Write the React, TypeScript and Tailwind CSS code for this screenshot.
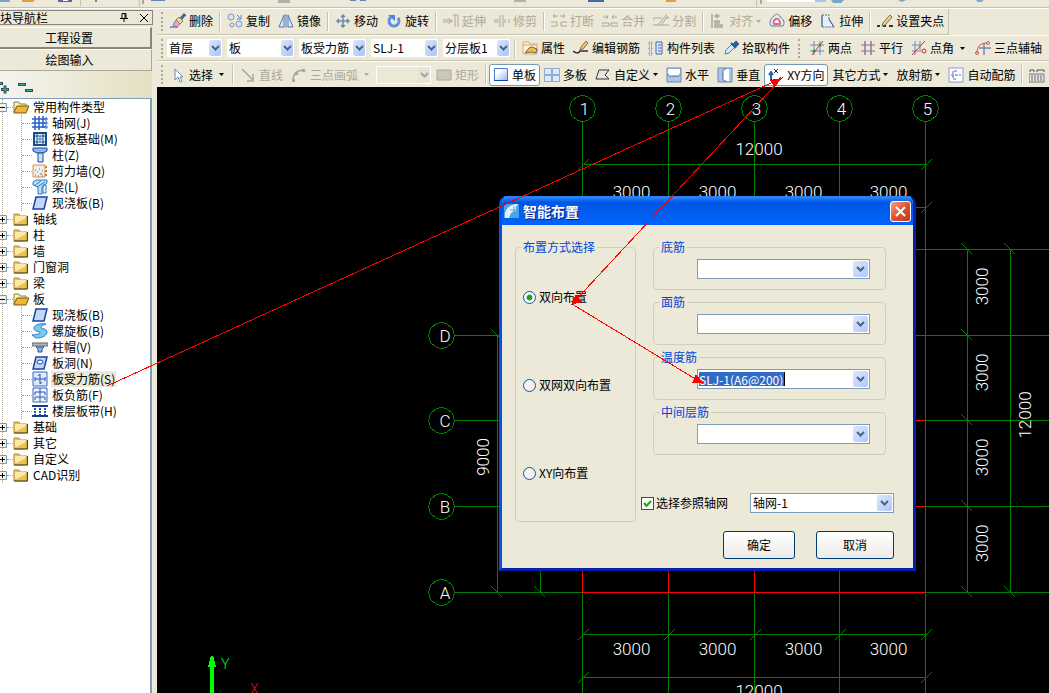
import { useState } from "react";
import type { ReactNode } from "react";

const icons: Record<string, ReactNode> = {
  erase: (
    <>
      <path d="M0 13h7l1 2H0z" fill="#7d9cc4" />
      <path d="M15 1l-5 6" stroke="#3f6795" strokeWidth="3" />
      <path d="M9 4l4 4-3 3-4-4z" fill="#f5d67b" stroke="#8c7a52" />
      <path d="M6 7l4 4-3 3-4-2z" fill="#e8a8c8" stroke="#8f7690" />
    </>
  ),
  copy: (
    <>
      <circle cx="4" cy="4" r="3" fill="#dbe4f2" stroke="#7f95b5" />
      <circle cx="5" cy="12" r="2" fill="#dbe4f2" stroke="#7f95b5" />
      <circle cx="12" cy="11" r="3" fill="#dbe4f2" stroke="#7f95b5" />
      <path d="M10 2l4 4M14 2v4h-4" fill="none" stroke="#5d83bd" />
    </>
  ),
  mirror: (
    <>
      <path d="M6 2v12H1zM10 2v12h5z" fill="#dde8fa" stroke="#4d77b8" />
      <path d="M8 1v14" stroke="#4d77b8" />
    </>
  ),
  move: (
    <path
      d="M8 2v12M2 8h12M6 4l2-2 2 2M6 12l2 2 2-2M4 6L2 8l2 2M12 6l2 2-2 2"
      fill="none"
      stroke="#6f8bb3"
      strokeWidth="1.5"
    />
  ),
  rotate: (
    <>
      <path d="M5 4a5 5 0 1 0 7 1" fill="none" stroke="#5f90df" strokeWidth="3" />
      <path d="M2 2h7v6z" fill="#4f83d9" />
    </>
  ),
  extend: (
    <path d="M0 7h5M0 9h5M6 5v6M8 6v4M12 2v12M15 2v12M6 8h4M10 2h5" fill="none" stroke="#aca899" />
  ),
  trim: <path d="M0 7h5M0 9h5M6 2v12M9 2v12M10 7h2M14 7h2M10 9h2M14 9h2" fill="none" stroke="#aca899" />,
  breakLine: (
    <path d="M7 3H2l2-2M2 3l2 2M9 3h5l-2-2M14 3l-2 2M0 9h6v4H0M16 9h-6v4h6" fill="none" stroke="#aca899" />
  ),
  merge: (
    <path d="M1 4h5M4 2l2 2-2 2M15 4h-5M12 2l-2 2 2 2M0 10h7v3H0zM9 10h7v3H9z" fill="none" stroke="#aca899" />
  ),
  split: <path d="M0 5h9M0 12h16M0 5v3M14 1L5 12M15 3L8 12M12 5h4" fill="none" stroke="#aca899" />,
  align: <path d="M2 1v14M5 3h5M8 1L5 3l3 2M5 8h4v2H5zM5 12h7v2H5z" fill="none" stroke="#aca899" strokeWidth="1.5" />,
  offset: (
    <>
      <path d="M5 3c2-3 5-2 6 1 4 2 5 6 3 9H2C0 10 1 6 5 3z" fill="#e5edf8" stroke="#567aad" />
      <path d="M7 6c2-1 5 3 4 5H5c-1-2 0-4 2-5z" fill="#fff" stroke="#e07070" strokeWidth="2" />
    </>
  ),
  stretch: (
    <>
      <path d="M2 2h7v5l5 7H2z" fill="#e8eff9" stroke="#42659b" strokeDasharray="2 1" />
      <path d="M2 2v12M9 6l5 8" fill="none" stroke="#42659b" />
    </>
  ),
  grip: (
    <>
      <path d="M0 13h3M6 13h3M12 13h4" stroke="#333" strokeWidth="2" />
      <path d="M13 2l-7 8-1 3 3-1 7-8z" fill="#f3d98a" stroke="#7a6a4a" />
    </>
  ),
  property: (
    <>
      <path d="M1 2h6l1 2h7v10H1z" fill="#fdf0dc" stroke="#e0a56c" />
      <path d="M1 5h14" stroke="#e0a56c" />
      <path d="M3 13l4-5 3-1 5 2-1 4-5-1z" fill="#e8c14b" stroke="#766345" />
    </>
  ),
  edit: (
    <>
      <path d="M0 11c3 2 5 3 7 0h8" fill="none" stroke="#333" strokeWidth="1.5" />
      <path d="M13 1l-5 6-1 3 3-1 5-6z" fill="#f2c66c" stroke="#a5604c" />
    </>
  ),
  list: (
    <>
      <path d="M1 2h3v3H1zM1 7h3v3H1zM1 12h3v3H1z" fill="#d6e3f8" stroke="#5d7dae" strokeDasharray="1 1" />
      <path d="M8 2h6v12H8z" fill="#e3ebfa" stroke="#3e66a7" />
      <path d="M10 5h3M10 8h3M10 11h3" stroke="#3e66a7" />
    </>
  ),
  pick: (
    <>
      <path d="M2 14l1-4 6-6 3 3-6 6z" fill="#d9eaff" stroke="#4f7eb5" />
      <path d="M8 3l5 5M10 5l3-3 2 2-3 3z" stroke="#245f9f" strokeWidth="2" fill="#245f9f" />
    </>
  ),
  twoPoint: (
    <>
      <path d="M1 5h14M1 11h14M5 1v14M11 1v14" stroke="#7087b5" />
      <path d="M3 15L14 1" stroke="#c43131" />
      <circle cx="11" cy="5" r="1.5" fill="#3d8d46" />
      <circle cx="5" cy="11" r="1.5" fill="#3d8d46" />
    </>
  ),
  parallel: (
    <>
      <path d="M5 1v14M11 1v14" stroke="#7087b5" strokeWidth="1.5" />
      <path d="M1 5h14M1 11h14" stroke="#be5f67" />
    </>
  ),
  pointAngle: (
    <>
      <path d="M1 5h9M1 11h9M4 1v14M9 1v9" stroke="#7087b5" />
      <path d="M1 15L14 1" stroke="#c43131" />
      <circle cx="13" cy="11" r="2" fill="none" stroke="#c43131" />
    </>
  ),
  threePoint: (
    <>
      <path d="M4 8h12M9 3v12" stroke="#7087b5" strokeWidth="1.5" />
      <path d="M2 13c0-7 4-10 10-10" fill="none" stroke="#d45151" />
      <circle cx="13" cy="3" r="1.5" fill="none" stroke="#d45151" />
      <circle cx="2" cy="13" r="1.5" fill="none" stroke="#d45151" />
    </>
  ),
  cursor: <path d="M5 2v11l3-3 2 5 2-1-2-4h3z" fill="#fff" stroke="#7288b4" />,
  line: <path d="M2 2l11 11M13 7v7H7" fill="none" stroke="#aca899" strokeWidth="1.5" />,
  arc: (
    <>
      <path d="M2 14c0-7 4-11 11-11" fill="none" stroke="#aca899" strokeWidth="1.5" />
      <path d="M1 12h3v3H1zM4 5h3v3H4zM11 2h3v3h-3z" fill="#aca899" />
    </>
  ),
  rect: <path d="M1 3h14v10H1z" fill="#cbc8ba" stroke="#aca899" />,
  single: (
    <>
      <defs>
        <linearGradient id="plate" x1="0" y1="0" x2="1" y2="1">
          <stop offset="0.3" stopColor="#fff" />
          <stop offset="1" stopColor="#8db4f5" />
        </linearGradient>
      </defs>
      <path d="M1.500 1.500h13v12h-13z" fill="url(#plate)" stroke="#4a7ad0" />
      <path d="M1 13.500h14" stroke="#1244a8" />
    </>
  ),
  multi: (
    <>
      <path d="M0 1h16v14H0z" fill="#8faed8" />
      <path d="M1 2h6v5H1zM9 2h6v5H9zM1 9h6v5H1zM9 9h6v5H9z" fill="#dceafa" />
    </>
  ),
  custom: <path d="M4 3h10l-4 5 4 4H1z" fill="none" stroke="#2f3445" />,
  horizontal: (
    <>
      <path d="M1 1h14v14H1z" fill="#a8c5eb" stroke="#6d8ab5" />
      <path d="M2 2h12v7H2z" fill="#fff" />
      <path d="M2 7c1 3 2 2 6 2s5 1 6-2" fill="none" stroke="#3f598a" />
    </>
  ),
  vertical: (
    <>
      <path d="M1 1h14v14H1z" fill="#a8c5eb" stroke="#6d8ab5" />
      <path d="M6 2h6v12H6z" fill="#fff" />
      <path d="M9 2c-4 0-3 2-3 6s-1 6 3 6" fill="none" stroke="#3f598a" />
    </>
  ),
  xy: (
    <>
      <path d="M3 13V6M1 8l2-3 2 3" fill="none" stroke="#2c61ba" strokeWidth="2" />
      <path d="M6 2l4 4M10 2L6 6M3 12c2 2 4 2 7 1M12 10l1 2 2-2" fill="none" stroke="#222" />
    </>
  ),
  auto: (
    <>
      <path d="M1 1h14v14H1z" fill="#fff" stroke="#8f96d4" />
      <path d="M9 4H5v8h4M3 8h10" fill="none" stroke="#4a64c8" strokeDasharray="3 1" />
    </>
  ),
  calendar: (
    <>
      <path d="M0 7h15v8H0z" fill="#e7e7e7" stroke="#777" />
      <path d="M3 8v6M6 8v6M9 8v6M12 8v6" stroke="#6a6a6a" />
      <path d="M1 5V3h4v2M8 5V3h7v2" fill="none" stroke="#555" />
    </>
  ),
  folder: (
    <>
      <path d="M1 3h5l1 2h7v9H1z" fill="#efc04a" stroke="#a98e50" />
      <path d="M2 5h11v2L4 12H2z" fill="#fbe9a4" />
      <path d="M1 14h13.500V5" fill="none" stroke="#57420f" />
    </>
  ),
  folderOpen: (
    <>
      <path d="M1 13V3h5l1 2h6v3" fill="#fbeeb7" stroke="#9a7d3b" />
      <path d="M1 13l3-6h12l-3 7H1z" fill="#edb935" stroke="#745613" />
    </>
  ),
  grid: (
    <>
      <path d="M3 1v14M7 1v14M11 1v12M0 4h13M0 8h13M0 12h13" stroke="#2a5fc1" strokeWidth="1.5" />
      <path d="M13 3h2v2h-2zM13 7h2v2h-2zM13 11h2v2h-2z" fill="#fff" stroke="#2a5fc1" />
    </>
  ),
  raft: (
    <>
      <path d="M2 2h12v12H2z" fill="#e9f5ff" stroke="#164d8e" strokeWidth="2" />
      <path d="M5 3v10M11 3v10M3 5h10M3 11h10" stroke="#164d8e" />
      <path d="M8 5v6M5 8h6" stroke="#4383bb" />
    </>
  ),
  column: (
    <>
      <path d="M1 1h14v3l-4 2H5L1 4z" fill="#8bb5ed" stroke="#1d4792" />
      <path d="M6 6h5v9H6z" fill="#cce1fb" stroke="#1d4792" />
    </>
  ),
  shear: (
    <>
      <path d="M1 2h12v12H1z" fill="#efeeeb" stroke="#d58b5b" />
      <path d="M3 7h1M7 6h1M5 9h1M10 8h1M3 12h1M8 11h2M6 13h1M10 13h1" stroke="#666" />
      <path d="M13 4h2M13 8h2M13 12h2" stroke="#db7720" strokeWidth="2" />
    </>
  ),
  beam: (
    <>
      <path d="M1 3l3-2h11v3l-5 4v7H6V8L1 6z" fill="#bce0fa" stroke="#287bba" />
      <path d="M3 6l6-4M5 8l8-5M11 6h3v8h-3z" fill="none" stroke="#287bba" />
    </>
  ),
  slab: <path d="M4 2h11l-3 12H1z" fill="#c0d7fa" stroke="#1c439c" strokeWidth="1.5" />,
  spiral: (
    <path
      d="M14 1C8 0 1 2 2 6c1 3 7 2 6 4-1 1-5 2-8 2l4 3c7 0 11-3 11-6 0-4-7-3-6-5 0-1 2-2 5-3z"
      fill="#7cc9ef"
      stroke="#2a7dc8"
    />
  ),
  cap: (
    <>
      <path d="M0 4h16v3H0z" fill="#b8b8b8" stroke="#626262" />
      <path d="M4 8h8l-2 2v3H6v-3z" fill="#8eb6ef" stroke="#2453a3" />
    </>
  ),
  hole: (
    <>
      <path d="M4 2h11l-3 12H1z" fill="#c0d7fa" stroke="#1c439c" strokeWidth="1.5" />
      <ellipse cx="8" cy="7" rx="3" ry="2" fill="#fff" stroke="#1c439c" />
    </>
  ),
  mainBar: (
    <>
      <path d="M1 1h14v14H1z" fill="#dfe9fd" stroke="#3d64be" />
      <path d="M3 8h10M8 3v10M3 6v4M13 10V6M6 5l2-2M10 11l-2 2" fill="none" stroke="#2854ad" />
    </>
  ),
  negBar: (
    <>
      <path d="M1 1h14v14H1z" fill="#edf3ff" stroke="#3d64be" />
      <path d="M8 1v14M3 8V5h10v3M3 13v-3h10v3" fill="none" stroke="#2854ad" />
    </>
  ),
  strip: (
    <>
      <path d="M0 3h16M0 13h16" stroke="#173b83" strokeWidth="2" />
      <path d="M3 5v7M8 5v7M13 5v7" stroke="#2854ad" strokeWidth="2" strokeDasharray="2 1" />
    </>
  ),
};

function Icon({ name }: { name: string }) {
  return (
    <svg viewBox="0 0 16 16" className="size-4 shrink-0" aria-hidden="true">
      {icons[name]}
    </svg>
  );
}

type ToolProps = {
  icon?: string;
  label: string;
  off?: boolean;
  active?: boolean;
  arrow?: "menu" | "split";
};

function Tool({ icon, label, off, active, arrow }: ToolProps) {
  return (
    <button
      disabled={off}
      className={
        "flex h-[22px] shrink-0 items-center gap-[3px] rounded-[3px] whitespace-nowrap " +
        (active ? "border border-[#7a98af] bg-white px-[3px]" : "px-1") +
        (off ? " text-[#aca899]" : "")
      }
    >
      {icon && <Icon name={icon} />}
      {label && <span>{label}</span>}
      {arrow && (
        <svg
          viewBox="0 0 5 3"
          className={arrow === "split" ? "ml-[3px] mr-0.5 h-[3px] w-[5px]" : "h-[3px] w-[5px]"}
        >
          <path d="M0 0h5L2.500 3z" fill="currentColor" />
        </svg>
      )}
    </button>
  );
}

function Sep() {
  return <span className="mx-0.5 h-[19px] w-0.5 shrink-0 border-r border-l border-r-white border-l-[#c5c2b2]" />;
}

function Grip() {
  return <span className="mx-0.5 h-[19px] w-[3px] shrink-0 border-l-2 border-dotted border-[#aaa797]" />;
}

function Chevron() {
  return (
    <svg viewBox="0 0 9 6" className="h-1.5 w-[9px]" aria-hidden="true">
      <path d="M1 1l3.500 3.500L8 1" fill="none" stroke="#4d6185" strokeWidth="2" />
    </svg>
  );
}

function ToolSelect({ label, value, wide, off }: { label: string; value: string; wide?: boolean; off?: boolean }) {
  return (
    <div className={wide ? "relative w-[67px] shrink-0" : "relative w-[55px] shrink-0"}>
      <select
        aria-label={label}
        disabled={off}
        className={
          "block h-[18px] w-full appearance-none pl-0.5 leading-4 " +
          (off ? "border border-white bg-[#ece9d8]" : "bg-white")
        }
      >
        <option>{value}</option>
      </select>
      <span
        className={
          "pointer-events-none absolute top-px right-px flex h-4 w-3 items-center justify-center rounded-xs " +
          (off ? "bg-[#e4e1d2] opacity-50" : "bg-linear-to-br from-[#dce7fe] to-[#a9c4f8]")
        }
      >
        <Chevron />
      </span>
    </div>
  );
}

const treeData = [
  {
    name: "常用构件类型",
    children: [
      ["grid", "轴网(J)"],
      ["raft", "筏板基础(M)"],
      ["column", "柱(Z)"],
      ["shear", "剪力墙(Q)"],
      ["beam", "梁(L)"],
      ["slab", "现浇板(B)"],
    ],
  },
  { name: "轴线" },
  { name: "柱" },
  { name: "墙" },
  { name: "门窗洞" },
  { name: "梁" },
  {
    name: "板",
    children: [
      ["slab", "现浇板(B)"],
      ["spiral", "螺旋板(B)"],
      ["cap", "柱帽(V)"],
      ["hole", "板洞(N)"],
      ["mainBar", "板受力筋(S)"],
      ["negBar", "板负筋(F)"],
      ["strip", "楼层板带(H)"],
    ],
  },
  { name: "基础" },
  { name: "其它" },
  { name: "自定义" },
  { name: "CAD识别" },
];

function Tree() {
  const [selected, setSelected] = useState("板受力筋(S)");
  return (
    <ul className="ml-0.5 border-l border-dotted border-[#aca899]">
      {treeData.map((node) => (
        <li key={node.name}>
          <div className="-ml-[5px] flex h-4 items-center">
            <svg viewBox="0 0 9 9" className="size-[9px] shrink-0">
              <path d="M.5 .5h8v8h-8z" fill="#f3f1ea" stroke="#7b9ab8" />
              <path d={node.children ? "M2 4.500h5" : "M2 4.500h5M4.500 2v5"} stroke="#000" />
            </svg>
            <span className="w-1.5 border-t border-dotted border-[#aca899]" />
            <Icon name={node.children ? "folderOpen" : "folder"} />
            <span className="ml-1 whitespace-nowrap">{node.name}</span>
          </div>
          {node.children && (
            <ul className="ml-[18px] border-l border-dotted border-[#aca899]">
              {node.children.map(([icon, label]) => (
                <li key={label} className="flex h-4 items-center">
                  <span className="w-2.5 border-t border-dotted border-[#aca899]" />
                  <Icon name={icon} />
                  <button
                    onClick={() => setSelected(label)}
                    className={
                      selected === label
                        ? "ml-[3px] h-4 bg-[#ece9d8] px-px leading-4 whitespace-nowrap"
                        : "ml-[3px] h-4 px-px leading-4 whitespace-nowrap"
                    }
                  >
                    {label}
                  </button>
                </li>
              ))}
            </ul>
          )}
        </li>
      ))}
    </ul>
  );
}

function Sidebar() {
  return (
    <aside className="flex w-[157px] shrink-0 flex-col pt-px">
      <div className="mr-1 flex h-[15px] items-center justify-between border border-l-0 border-[#8a877a] pr-1">
        <span className="leading-3">块导航栏</span>
        <span className="flex items-center gap-3">
          <button aria-label="固定">
            <svg viewBox="0 0 8 9" className="h-[9px] w-2">
              <path d="M2 .5h4v5M2 .5v5M0 5.500h8M4 5v4M5 0v5" fill="none" stroke="#000" />
            </svg>
          </button>
          <button aria-label="关闭面板">
            <svg viewBox="0 0 8 8" className="size-2">
              <path d="M0 0l8 8M8 0L0 8" stroke="#000" />
            </svg>
          </button>
        </span>
      </div>
      <button className="mt-0.5 mr-[5px] h-[22px] border-t border-r-2 border-b-2 border-t-white border-r-[#8a877a] border-b-[#8a877a] pr-3">
        工程设置
      </button>
      <button className="mr-[5px] h-[22px] border-t border-r border-b border-t-white border-r-[#aca899] border-b-[#aca899] pr-3">
        绘图输入
      </button>
      <div className="mr-[5px] flex h-[27px] items-end gap-2 bg-linear-to-r from-[#f4f4ee] to-[#e5e0c2] pb-1">
        <button aria-label="展开">
          <svg viewBox="0 0 10 12" className="h-3 w-2.5">
            <path d="M0 1.500h3M1 7.500h8M5 3.500v8" stroke="#2c5758" strokeWidth="3" />
            <path d="M0 1.500h2M2 7.500h6M5 4.500v6" stroke="#3fa9a5" />
          </svg>
        </button>
        <button aria-label="折叠">
          <svg viewBox="0 0 16 12" className="h-3 w-4">
            <path d="M0 2.500h8M7 8.500h8" stroke="#2c5758" strokeWidth="3" />
            <path d="M1 2.500h6M8 8.500h6" stroke="#3fa9a5" />
          </svg>
        </button>
      </div>
      <nav className="mr-[5px] min-h-0 flex-1 overflow-hidden border-t border-r-2 border-[#7f9db9] bg-white">
        <Tree />
      </nav>
    </aside>
  );
}

// the row above the toolbars, only its lower edge is visible
function TopStrip() {
  return (
    <div className="h-[9px] shrink-0 border-b border-white">
      <svg className="block h-2 w-full border-b border-[#c5c2b2]">
        <path d="M0 0h10v2H0z" fill="#7ba6cc" />
        <path d="M22 0h13l-2 2H22z" fill="#d9a23e" />
        <path d="M58 0h14v2H58z" fill="#665fb0" />
        <path d="M63 0h5v1h-5z" fill="#fff" />
        <path d="M80.500 0v6M139.500 0v7M756.500 0v7" stroke="#c5c2b2" />
        <path d="M95 0h2v2h-2zM151 0h14v1h-14zM350 0h6v1h-6zM360 0h6v1h-6z" fill="#6583b5" />
        <path d="M142 0h2v4h-2zM760 0h2v4h-2z" fill="#aaa797" />
        <path d="M514 0h12v2h-12zM278 0h12v3h-12z" fill="#b5b2a5" />
        <path d="M588 0h16v2h-16z" fill="#4469a8" />
        <path d="M666 0h10v2h-10z" fill="#d9a23e" />
        <path d="M767 0h48v2h-48z" fill="#fff" />
        <path d="M815 0h11v2h-11z" fill="#a9c4f8" />
        <path d="M831 0h13l-3 3h-8zM898 0h8l-4 2zM976 0h8l-3 2h-3z" fill="#7ba6cc" />
      </svg>
    </div>
  );
}

function Toolbars() {
  return (
    <div className="shrink-0">
      <div className="flex h-[26px] w-fit items-center border-r border-b border-[#c5c2b2] pb-px pl-0.5">
        <Grip />
        <Tool icon="erase" label="删除" />
        <Sep />
        <Tool icon="copy" label="复制" />
        <Tool icon="mirror" label="镜像" />
        <Sep />
        <Tool icon="move" label="移动" />
        <Tool icon="rotate" label="旋转" />
        <Sep />
        <Tool icon="extend" label="延伸" off />
        <Tool icon="trim" label="修剪" off />
        <Sep />
        <Tool icon="breakLine" label="打断" off />
        <Tool icon="merge" label="合并" off />
        <Tool icon="split" label="分割" off />
        <Sep />
        <Tool icon="align" label="对齐" off arrow="menu" />
        <Tool icon="offset" label="偏移" />
        <Tool icon="stretch" label="拉伸" />
        <Sep />
        <Tool icon="grip" label="设置夹点" />
      </div>
      <div className="flex h-[26px] items-center border-t border-b border-t-white border-b-[#c5c2b2] pl-0.5">
        <Grip />
        <div className="flex gap-[5px] pl-px pr-0.5">
          <ToolSelect label="楼层" value="首层" />
          <ToolSelect label="构件类别" value="板" wide />
          <ToolSelect label="构件类型" value="板受力筋" wide />
          <ToolSelect label="构件" value="SLJ-1" wide />
          <ToolSelect label="分层" value="分层板1" wide />
        </div>
        <Sep />
        <Tool icon="property" label="属性" />
        <Tool icon="edit" label="编辑钢筋" />
        <Tool icon="list" label="构件列表" />
        <Tool icon="pick" label="拾取构件" />
        <div className="flex px-0.5">
          <Grip />
        </div>
        <Tool icon="twoPoint" label="两点" />
        <Tool icon="parallel" label="平行" />
        <Tool icon="pointAngle" label="点角" arrow="split" />
        <Tool icon="threePoint" label="三点辅轴" />
      </div>
      <div className="flex h-[26px] items-center border-t border-white pl-0.5">
        <Grip />
        <Tool icon="cursor" label="选择" arrow="split" />
        <Sep />
        <Tool icon="line" label="直线" off />
        <Tool icon="arc" label="三点画弧" off arrow="split" />
        <div className="px-px">
          <ToolSelect label="绘制方式" value="" off />
        </div>
        <Tool icon="rect" label="矩形" off />
        <Sep />
        <Tool icon="single" label="单板" active />
        <Tool icon="multi" label="多板" />
        <Tool icon="custom" label="自定义" arrow="menu" />
        <Tool icon="horizontal" label="水平" />
        <Tool icon="vertical" label="垂直" />
        <Tool icon="xy" label="XY方向" active />
        <Tool label="其它方式" arrow="menu" />
        <Tool label="放射筋" arrow="menu" />
        <Tool icon="auto" label="自动配筋" />
        <Sep />
        <Tool icon="calendar" label="" />
      </div>
    </div>
  );
}

const cols = [425.5, 511.5, 597.5, 682.5, 768.5];
const rows = [162.5, 248.5, 333.5, 419.5, 505.5];
const rowNames = ["", "D", "C", "B", "A"];

const bubble = (cx: number, cy: number) =>
  `M${cx - 5} ${cy - 12}L${cx} ${cy - 13}L${cx + 5} ${cy - 12}L${cx + 11} ${cy - 7}L${cx + 13} ${cy}L${cx + 11} ${cy + 7}L${cx + 5} ${cy + 12}L${cx} ${cy + 13}L${cx - 5} ${cy + 12}L${cx - 11} ${cy + 7}L${cx - 13} ${cy}L${cx - 11} ${cy - 7}Z`;
const slash = (x: number, y: number) => `M${x - 5} ${y + 6}L${x + 6} ${y - 5}`;
const backslash = (x: number, y: number) => `M${x - 6} ${y - 6}L${x + 5} ${y + 5}`;

function Drawing() {
  return (
    <svg className="block size-full font-[Roboto,sans-serif] text-[17px] font-light">
      <g fill="none" stroke="#008000" shapeRendering="crispEdges">
        {cols.map((x) => (
          <path key={x} d={`${bubble(x, 21.5)}M${x} 35V2000${slash(x, 120.5)}${slash(x, 547.5)}`} />
        ))}
        {rows.slice(1).map((y) => (
          <path key={y} d={`${bubble(284.5, y)}M298 ${y}H425`} />
        ))}
        {rows.map((y) => (
          <path key={y} d={`M768 ${y}H3000${backslash(810.5, y)}`} />
        ))}
        <path d="M425 77.500H769M425 120.500H769M425 547.500H769M425 590.500H769" />
        <path d="M340.500 248V506M383.500 162V506M810.500 162V506M853.500 162V506" />
        <path
          d={
            slash(425.5, 77.5) +
            slash(768.5, 77.5) +
            slash(425.5, 590.5) +
            slash(768.5, 590.5) +
            backslash(340.5, 248.5) +
            backslash(340.5, 505.5) +
            backslash(383.5, 505.5) +
            backslash(853.5, 162.5) +
            backslash(853.5, 505.5)
          }
        />
      </g>
      <g stroke="#f00" shapeRendering="crispEdges">
        {cols.map((x) => (
          <path key={x} d={`M${x} 162V506`} />
        ))}
        {rows.map((y) => (
          <path key={y} d={`M425 ${y}H769`} />
        ))}
      </g>
      <g fill="#fff" textAnchor="middle">
        {cols.map((x, i) => (
          <text key={x} x={x + 2} y="28">
            {i + 1}
          </text>
        ))}
        {rows.slice(1).map((y, i) => (
          <text key={y} x="288" y={y + 6}>
            {rowNames[i + 1]}
          </text>
        ))}
        {cols.slice(0, 4).map((x) => (
          <text key={x} x={x + 49} y="111">
            3000
          </text>
        ))}
        {cols.slice(0, 4).map((x) => (
          <text key={x} x={x + 49} y="568">
            3000
          </text>
        ))}
        <text x="602" y="68">
          12000
        </text>
        <text x="602" y="610">
          12000
        </text>
        {rows.slice(0, 4).map((y) => (
          <text key={y} transform={`translate(831 ${y + 37}) rotate(-90)`}>
            3000
          </text>
        ))}
        <text transform="translate(874 328) rotate(-90)">12000</text>
        <text transform="translate(332 370) rotate(-90)">9000</text>
      </g>
      <path d="M53 2000V580h-2v-2h1v-4h1v-4h1v-1h2v1h1v4h1v4h1v2h-2v1420z" fill="#0f0" />
      <g className="text-[14px]">
        <text x="64" y="582" fill="#0f0">
          Y
        </text>
        <text x="93" y="607" fill="#f00">
          X
        </text>
      </g>
    </svg>
  );
}

const groupClass = "rounded-[4px] border border-[#d0cfbe]";
const arrowClass =
  "flex h-4 w-[15px] items-center justify-center rounded-xs bg-linear-to-br from-[#dce7fe] to-[#b0c8f8]";

function Combo({ label, value }: { label: string; value?: string }) {
  return (
    <div className="relative">
      <select
        aria-label={label}
        className="block h-5 w-full appearance-none border border-[#7f9db9] bg-white pl-0.5 leading-4"
      >
        <option>{value}</option>
      </select>
      <span className={"pointer-events-none absolute top-0.5 right-0.5 " + arrowClass}>
        <Chevron />
      </span>
    </div>
  );
}

function Dialog() {
  const [mode, setMode] = useState("双向布置");
  const [useAxis, setUseAxis] = useState(true);
  const [temp, setTemp] = useState("SLJ-1(A6@200)");
  return (
    <section
      role="dialog"
      aria-label="智能布置"
      className="absolute top-[109px] left-[342px] w-[417px] overflow-hidden rounded-t-lg border-t border-r-3 border-b-3 border-l-3 border-t-[#2a7ff5] border-r-[#0322a8] border-b-[#0322a8] border-l-[#0a4fe0] bg-[#ece9d8]"
    >
      <header className="flex h-7 items-center bg-linear-to-b from-[#2b87fb] via-[#0055e5] via-20% to-[#0264fc] px-0.5">
        <svg viewBox="0 0 16 16" className="size-4">
          <path d="M0 4c0-2 2-3 4-3h11v14H0z" fill="#4ba4e4" />
          <path d="M1 15C0 7 5 1 14 1l-2 3v4h-2l-3 2-2 5z" fill="#e0f2fd" />
          <path d="M10 3v6M6 7h7" stroke="#5ba4dc" />
        </svg>
        <h2 className="ml-[3px] flex-1 text-sm font-bold text-white [text-shadow:1px_1px_#0a1883]">智能布置</h2>
        <button
          aria-label="关闭"
          className="flex size-[21px] items-center justify-center rounded-[3px] border border-white bg-linear-to-br from-[#f0a088] via-[#e0512c] to-[#c43a14]"
        >
          <svg viewBox="0 0 11 11" className="size-[11px]">
            <path d="M1 1l9 9M10 1l-9 9" stroke="#fff" strokeWidth="2" />
          </svg>
        </button>
      </header>
      <div className="flex items-start gap-[5px] pt-3.5 pr-[19px] pb-[9px] pl-[13px]">
        <fieldset className={"w-[121px] shrink-0 pb-[38px] " + groupClass}>
          <legend className="ml-[5px] px-0.5 leading-4 text-[#0046d5]">布置方式选择</legend>
          <div className="flex flex-col gap-[68px] pt-8 pl-[7px]">
            {["双向布置", "双网双向布置", "XY向布置"].map((m) => (
              <label key={m} className="flex h-5 items-center gap-[3px] whitespace-nowrap">
                <input
                  type="radio"
                  name="mode"
                  checked={mode === m}
                  onChange={() => setMode(m)}
                  className="size-[13px] appearance-none rounded-full border border-[#1d5281] bg-[#f4f3ee] checked:bg-radial checked:from-[#21a121] checked:from-30% checked:to-white checked:to-45%"
                />
                {m}
              </label>
            ))}
          </div>
        </fieldset>
        <div className="flex-1">
          <div className="flex flex-col gap-1 pr-2 pl-3">
            {["底筋", "面筋", "温度筋", "中间层筋"].map((g) => (
              <fieldset key={g} className={"pt-1 pr-[15px] pb-2.5 pl-[43px] " + groupClass}>
                <legend className="-ml-[38px] px-0.5 leading-4 text-[#0046d5]">{g}</legend>
                {g === "温度筋" ? (
                  <div className="flex h-5 items-center justify-between border border-[#7f9db9] bg-white px-px">
                    <input
                      aria-label={g}
                      value={temp}
                      onChange={(e) => setTemp(e.target.value)}
                      className="h-3.5 w-[86px] border-r border-black bg-[#316ac5] leading-3 text-white"
                    />
                    <button aria-label="展开列表" className={arrowClass}>
                      <Chevron />
                    </button>
                  </div>
                ) : (
                  <Combo label={g} />
                )}
              </fieldset>
            ))}
          </div>
          <div className="mt-[38px] flex items-center justify-between">
            <label className="flex items-center gap-0.5">
              <span className="relative size-[13px]">
                <input
                  type="checkbox"
                  checked={useAxis}
                  onChange={() => setUseAxis(!useAxis)}
                  className="peer block size-[13px] appearance-none border border-[#1d5281] bg-white"
                />
                <svg
                  viewBox="0 0 13 13"
                  className="pointer-events-none absolute inset-0 hidden size-[13px] peer-checked:block"
                >
                  <path d="M3 6l2.500 3L10 4" fill="none" stroke="#21a121" strokeWidth="2" />
                </svg>
              </span>
              选择参照轴网
            </label>
            <div className="w-36">
              <Combo label="参照轴网" value="轴网-1" />
            </div>
          </div>
          <div className="mt-[18px] flex justify-end gap-[21px]">
            <button className="h-7 w-[72px] rounded-[3px] border border-[#003c74] bg-linear-to-b from-white to-[#ecebe6]">
              确定
            </button>
            <button className="h-7 w-[78px] rounded-[3px] border border-[#003c74] bg-linear-to-b from-white to-[#ecebe6]">
              取消
            </button>
          </div>
        </div>
      </div>
    </section>
  );
}

export default function App() {
  return (
    <div className="relative flex h-screen flex-col overflow-hidden bg-[#ece9d8] font-['Noto_Sans_CJK_SC',sans-serif] text-xs text-black">
      <TopStrip />
      <div className="flex min-h-0 flex-1">
        <Sidebar />
        <main className="flex min-w-0 flex-1 flex-col">
          <Toolbars />
          <div className="relative min-h-0 flex-1 bg-black">
            <Drawing />
            <Dialog />
          </div>
        </main>
      </div>
      {/* red arrows: tree item -> XY button -> radio -> combo */}
      <svg className="pointer-events-none absolute inset-0 size-full" shapeRendering="crispEdges">
        <path d="M107 386L782 78L572 304L702 383" fill="none" stroke="#f00" />
        <path d="M782 78l-12 2 4 7zM571 305l5-11 6 8zM703 383l-11 0 4-9z" fill="#f00" />
      </svg>
    </div>
  );
}
